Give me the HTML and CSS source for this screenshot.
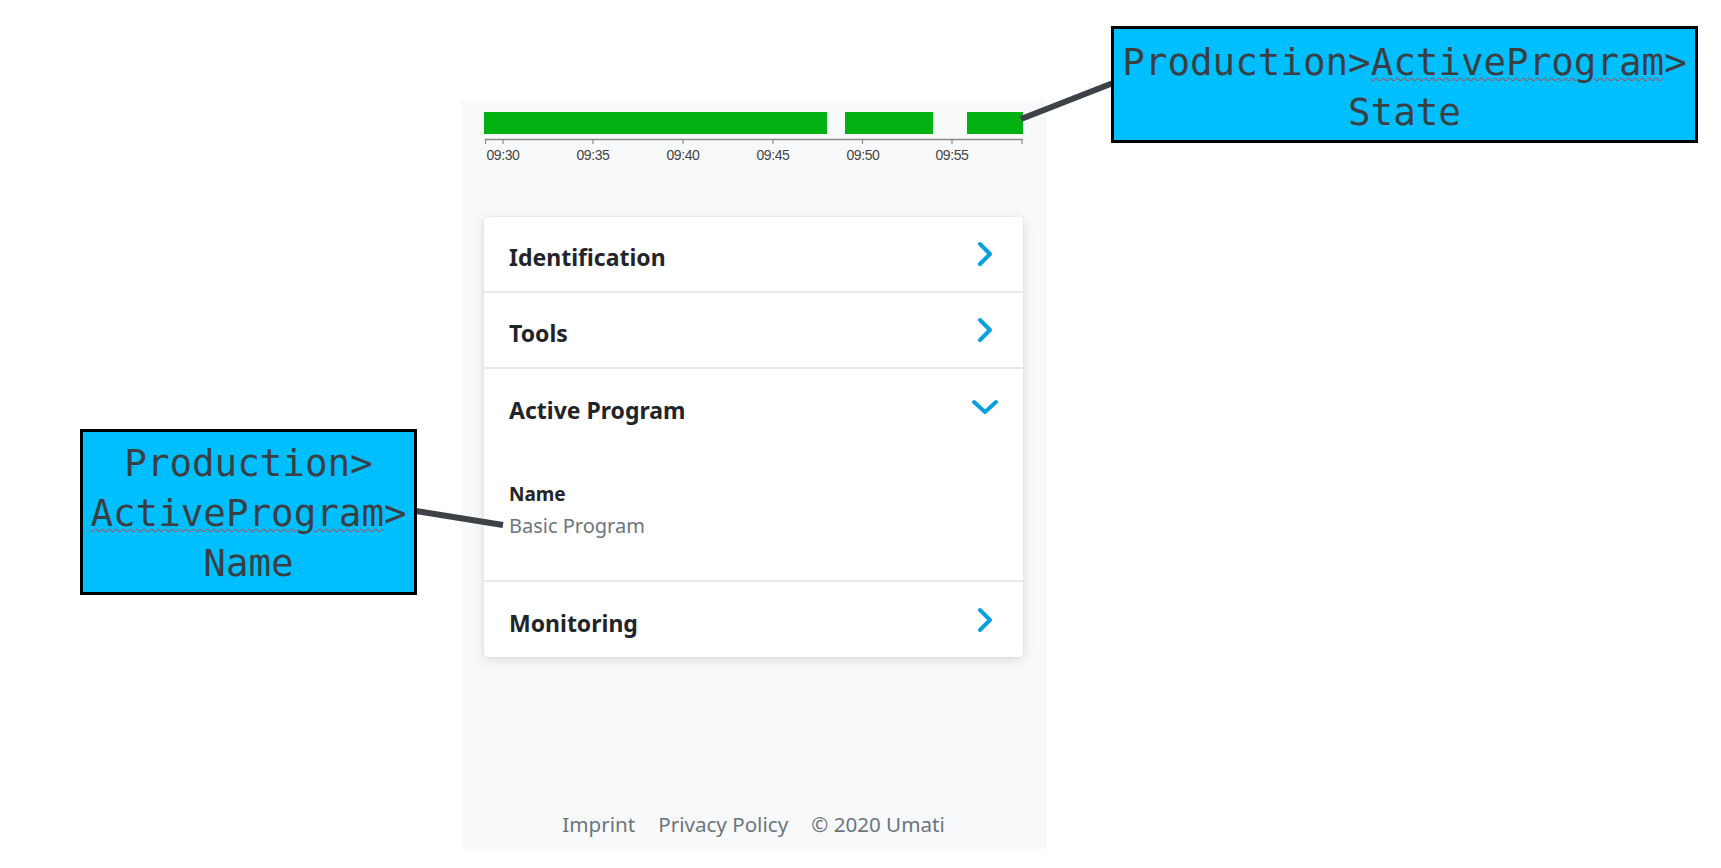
FILE: index.html
```html
<!DOCTYPE html>
<html lang="en">
<head>
<meta charset="utf-8">
<title>Active Program</title>
<link rel="stylesheet" href="styles.css">
</head>
<body>
<div class="stage">
  <main class="panel">
    <svg class="timeline" width="539" height="52" viewBox="0 0 539 52">
      <rect x="0" y="0" width="343" height="22" fill="#01b011"/>
      <rect x="361" y="0" width="88" height="22" fill="#01b011"/>
      <rect x="483" y="0" width="56" height="22" fill="#01b011"/>
      <line x1="1" y1="27.5" x2="539" y2="27.5" stroke="#8a8a8a" stroke-width="1.5"/>
      <g stroke="#8a8a8a" stroke-width="1.2">
        <line x1="1.5" y1="27" x2="1.5" y2="32"/>
        <line x1="19" y1="27" x2="19" y2="32"/>
        <line x1="109" y1="27" x2="109" y2="32"/>
        <line x1="199" y1="27" x2="199" y2="32"/>
        <line x1="289" y1="27" x2="289" y2="32"/>
        <line x1="378.5" y1="27" x2="378.5" y2="32"/>
        <line x1="468" y1="27" x2="468" y2="32"/>
        <line x1="538" y1="27" x2="538" y2="32"/>
      </g>
      <g class="tick-label" text-anchor="middle">
        <text x="19" y="48">09:30</text>
        <text x="109" y="48">09:35</text>
        <text x="199" y="48">09:40</text>
        <text x="289" y="48">09:45</text>
        <text x="379" y="48">09:50</text>
        <text x="468" y="48">09:55</text>
      </g>
    </svg>

    <section class="card">
      <div class="row">
        <span class="row-title">Identification</span>
        <svg class="chev" width="26" height="26" viewBox="0 0 26 26"><polyline points="8,3 18,13 8,23"/></svg>
      </div>
      <div class="row">
        <span class="row-title">Tools</span>
        <svg class="chev" width="26" height="26" viewBox="0 0 26 26"><polyline points="8,3 18,13 8,23"/></svg>
      </div>
      <div class="group">
        <div class="row row-open">
          <span class="row-title">Active Program</span>
          <svg class="chev" width="26" height="26" viewBox="0 0 26 26"><polyline points="2,8 13,18 24,8"/></svg>
        </div>
        <div class="group-body">
          <div class="field-label">Name</div>
          <div class="field-value">Basic Program</div>
        </div>
      </div>
      <div class="row row-last">
        <span class="row-title">Monitoring</span>
        <svg class="chev" width="26" height="26" viewBox="0 0 26 26"><polyline points="8,3 18,13 8,23"/></svg>
      </div>
    </section>

    <footer class="footer">
      <span>Imprint</span>
      <span>Privacy Policy</span>
      <span>© 2020 Umati</span>
    </footer>
  </main>

  <svg class="connectors" width="1721" height="868" viewBox="0 0 1721 868">
    <line x1="1021" y1="119" x2="1113" y2="83"/>
    <line x1="416" y1="511" x2="503" y2="525"/>
  </svg>

  <div class="callout callout-state">Production&gt;<span class="spell">ActiveProgram</span>&gt;<br>State</div>
  <div class="callout callout-name">Production&gt;<br><span class="spell">ActiveProgram</span>&gt;<br>Name</div>
</div>
</body>
</html>
```

FILE: styles.css
```css
html, body {
  margin: 0;
  padding: 0;
  background: #ffffff;
}

.stage {
  position: relative;
  width: 1721px;
  height: 868px;
  overflow: hidden;
  padding: 100px 0 0 461px;
  box-sizing: border-box;
  font-family: "Noto Sans", "Open Sans", sans-serif;
}

.panel {
  width: 586px;
  height: 749px;
  box-sizing: border-box;
  background: #f8f9fa;
  padding: 12px 24px 11px 23px;
  display: flex;
  flex-direction: column;
}

.timeline {
  display: block;
  flex: none;
}

.tick-label {
  font-family: "Liberation Sans", Arial, sans-serif;
  font-size: 14px;
  fill: #444444;
  letter-spacing: -0.4px;
}

.card {
  margin-top: 53px;
  background: #ffffff;
  border-radius: 4px;
  box-shadow: 0 3px 12px rgba(0, 0, 0, 0.13), 0 0 2px rgba(0, 0, 0, 0.08);
  display: flex;
  flex-direction: column;
}

.row {
  height: 76px;
  box-sizing: border-box;
  border-bottom: 2px solid #e6e8ea;
  padding: 0 25px;
  display: flex;
  align-items: center;
  justify-content: space-between;
}

.row-open {
  border-bottom: none;
}

.row-last {
  border-bottom: none;
  height: 75px;
}

.row-title {
  font-size: 23px;
  font-weight: 700;
  color: #212529;
  padding-top: 6px;
}

.chev {
  display: block;
  flex: none;
}

.chev polyline {
  fill: none;
  stroke: #09a0e0;
  stroke-width: 4;
  stroke-linecap: round;
  stroke-linejoin: round;
}

.group {
  border-bottom: 2px solid #e6e8ea;
}

.group-body {
  padding: 36px 25px 40px;
}

.field-label {
  font-size: 19px;
  font-weight: 700;
  line-height: 26px;
  color: #212529;
}

.field-value {
  margin-top: 5px;
  font-size: 20px;
  line-height: 28px;
  color: #6c757d;
}

.footer {
  margin-top: auto;
  display: flex;
  justify-content: center;
  gap: 23px;
  font-size: 20.6px;
  line-height: 27px;
  color: #6c757d;
}

.connectors {
  position: absolute;
  left: 0;
  top: 0;
  pointer-events: none;
}

.connectors line {
  stroke: #3d4249;
  stroke-width: 6;
}

.callout {
  position: absolute;
  box-sizing: border-box;
  background: #00bfff;
  border: 3px solid #000000;
  font-family: "DejaVu Sans Mono", "Liberation Mono", monospace;
  font-size: 37.5px;
  line-height: 50px;
  color: #3a3f44;
  text-align: center;
}

.callout-state {
  left: 1111px;
  top: 26px;
  width: 587px;
  height: 117px;
  padding-top: 8px;
}

.callout-name {
  left: 80px;
  top: 429px;
  width: 337px;
  height: 166px;
  padding-top: 6px;
}

.spell {
  text-decoration: underline wavy #e0302a;
  text-decoration-thickness: 1px;
  text-underline-offset: 2px;
}
```
